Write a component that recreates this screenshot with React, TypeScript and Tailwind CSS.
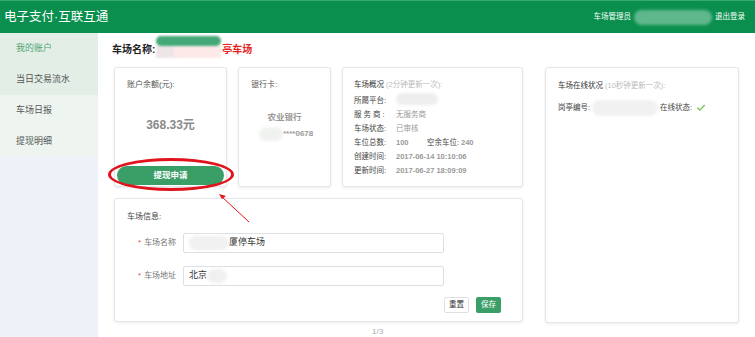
import { Check } from "lucide-react"

function Blur({ className }: { className: string }) {
  return <span className={"inline-block rounded-full blur-[1.5px] " + className} />
}

function Card({ className, children }: { className?: string; children?: React.ReactNode }) {
  return (
    <div className={"rounded-[3px] border border-[#e4e7ea] bg-white shadow-[0_1px_3px_rgba(0,0,0,0.08)] " + (className ?? "")}>
      {children}
    </div>
  )
}

function InfoRow({ label, value, spaced }: { label: string; value?: React.ReactNode; spaced?: boolean }) {
  return (
    <div className="flex h-[14px] items-center">
      <span className={"w-[42px] text-[#444] " + (spaced ? "tracking-[2px]" : "")}>{label}</span>
      <span className="font-bold text-[#999]">{value}</span>
    </div>
  )
}

function FormRow({ label, children }: { label: string; children: React.ReactNode }) {
  return (
    <div className="flex items-center">
      <span className="w-[56px] pl-[11px] text-[8px] text-[#777]">
        <span className="mr-[3px] text-[#e05050]">*</span>
        {label}
      </span>
      <div className="flex h-[20px] w-[261px] items-center rounded-[2px] border border-[#dcdfe3] bg-white pl-[5px] text-[9px] text-[#333]">
        {children}
      </div>
    </div>
  )
}

export default function App() {
  const menu = [
    { name: "我的账户", bg: "bg-[#e3eee7]", active: true },
    { name: "当日交易流水", bg: "bg-[#e3eee7]" },
    { name: "车场日报", bg: "bg-[#eef5f1]" },
    { name: "提现明细", bg: "bg-[#eef5f1]" },
  ]

  return (
    <div className="relative flex h-[337px] w-[755px] flex-col overflow-hidden bg-white font-['Liberation_Sans','Noto_Sans_CJK_SC',sans-serif]">
      {/* header */}
      <header className="flex h-[33px] shrink-0 items-center border-t border-[#3aa872] bg-[#0a8f4e] pl-[4px] pr-[10px] text-white">
        <h1 className="text-[12.5px] leading-none">电子支付·互联互通</h1>
        <div className="ml-auto flex items-center text-[7.5px]">
          <span>车场管理员</span>
          <Blur className="mx-[3px] h-[15px] w-[78px] bg-[#5fb88c]" />
          <span>退出登录</span>
        </div>
      </header>

      <div className="flex flex-1">
        {/* sidebar */}
        <aside className="flex w-[98px] shrink-0 flex-col bg-[#edf1f8]">
          {menu.map((m) => (
            <div
              key={m.name}
              className={"flex h-[31px] items-center pl-[16px] text-[9px] " + m.bg + (m.active ? " text-[#53a873]" : " text-[#555]")}
            >
              {m.name}
            </div>
          ))}
        </aside>

        {/* main */}
        <main className="flex-1 pl-[14px] pt-[8px]">
          <div className="flex h-[16px] items-center text-[10px] font-bold text-[#222]">
            <span>车场名称:</span>
            <span className="relative mx-[1px] h-[18px] w-[65px]">
              <span className="absolute bottom-0 left-0 h-[13px] w-[20px] bg-[#eee6e6] blur-[1px]" />
              <span className="absolute bottom-0 left-[18px] h-[13px] w-[47px] bg-[#fde9e8] blur-[1px]" />
              <span className="absolute left-0 top-[-4px] h-[10px] w-[65px] rounded-full bg-[#45a877] blur-[1px]" />
            </span>
            <span className="text-[#e8231d]">亭车场</span>
          </div>

          <div className="mt-[10px] flex gap-[22px] pl-[2px]">
            {/* left column */}
            <div className="flex w-[409px] flex-col gap-[11px]">
              <div className="flex h-[120px] gap-[11px] text-[8px]">
                <Card className="relative flex w-[113px] flex-col pl-[12px] pt-[11px]">
                  <span className="text-[#555]">账户余额(元):</span>
                  <span className="mt-[25px] pr-[12px] text-center text-[12px] font-bold text-[#8a8a8a]">368.33元</span>
                  <button className="absolute bottom-[1px] left-[2px] right-[2px] h-[19px] rounded-full bg-[#3a9e67] text-[8.5px] font-bold text-white">
                    提现申请
                  </button>
                </Card>
                <Card className="flex w-[93px] flex-col pl-[12px] pt-[11px]">
                  <span className="text-[#555]">银行卡:</span>
                  <span className="mt-[20px] pr-[12px] text-center text-[8.5px] font-bold text-[#999]">农业银行</span>
                  <div className="mt-[3px] flex items-center pl-[8px]">
                    <Blur className="h-[14px] w-[24px] bg-[#f0f2f0]" />
                    <span className="font-bold text-[#999]">****0678</span>
                  </div>
                </Card>
                <Card className="flex w-[181px] flex-col pl-[11px] pt-[11px] text-[7.5px]">
                  <div className="flex h-[12px] items-center text-[#333]">
                    车场概况<span className="ml-[2px] text-[#bbb]">(2分钟更新一次):</span>
                  </div>
                  <div className="mt-[3px]">
                    <InfoRow label="所屬平台:" value={<Blur className="h-[12px] w-[42px] bg-[#eeeeee]" />} />
                    <InfoRow label="服务商:" value={<span className="font-normal">无服务商</span>} spaced />
                    <InfoRow label="车场状态:" value={<span className="font-normal">已审核</span>} />
                    <div className="flex h-[14px] items-center">
                      <span className="w-[42px] text-[#444]">车位总数:</span>
                      <span className="w-[31px] font-bold text-[#999]">100</span>
                      <span className="w-[34px] text-[#444]">空余车位:</span>
                      <span className="font-bold text-[#999]">240</span>
                    </div>
                    <InfoRow label="创建时间:" value="2017-06-14 10:10:06" />
                    <InfoRow label="更新时间:" value="2017-06-27 18:09:09" />
                  </div>
                </Card>
              </div>

              <Card className="flex h-[124px] flex-col pl-[12px] pt-[12px]">
                <span className="text-[8px] text-[#444]">车场信息:</span>
                <div className="mt-[10px] flex flex-col gap-[13px]">
                  <FormRow label="车场名称">
                    <Blur className="h-[14px] w-[40px] bg-[#f0f0f0]" />
                    <span>厦停车场</span>
                  </FormRow>
                  <FormRow label="车场地址">
                    <span>北京</span>
                    <Blur className="h-[14px] w-[20px] bg-[#f0f0f0]" />
                  </FormRow>
                </div>
                <div className="mt-[11px] flex gap-[7px] pl-[317px]">
                  <button className="h-[16px] w-[25px] rounded-[2px] border border-[#dcdfe3] bg-white text-[7.5px] text-[#333]">重置</button>
                  <button className="h-[16px] w-[25px] rounded-[2px] bg-[#3a9e67] text-[7.5px] text-white">保存</button>
                </div>
              </Card>
            </div>

            {/* right column */}
            <Card className="flex h-[256px] w-[194px] flex-col pl-[12px] pt-[12px] text-[7.5px]">
              <div className="flex h-[12px] items-center text-[#333]">
                车场在线状况<span className="ml-[2px] text-[#bbb]">(10秒钟更新一次):</span>
              </div>
              <div className="mt-[9px] flex h-[14px] items-center text-[#444]">
                <span>岗亭编号:</span>
                <Blur className="mx-[2px] h-[16px] w-[66px] bg-[#f1f1f1]" />
                <span>在线状态:</span>
                <Check className="ml-[4px] h-[10px] w-[10px] text-[#6cc04a]" strokeWidth={3} />
              </div>
            </Card>
          </div>

          <div className="mt-[4px] pl-[260px] text-[8px] leading-[10px] text-[#aaa]">1/3</div>
        </main>
      </div>

      {/* annotation */}
      <div className="absolute left-[108px] top-[158px] h-[33px] w-[126px] rounded-[50%] border-[3px] border-[#e0141c]" />
      <svg className="absolute left-0 top-0" width="755" height="337">
        <line x1="249" y1="222" x2="221" y2="196" stroke="#e0141c" strokeWidth="1" />
        <polygon points="219,194 226,196 222,199" fill="#e0141c" />
      </svg>
    </div>
  )
}
